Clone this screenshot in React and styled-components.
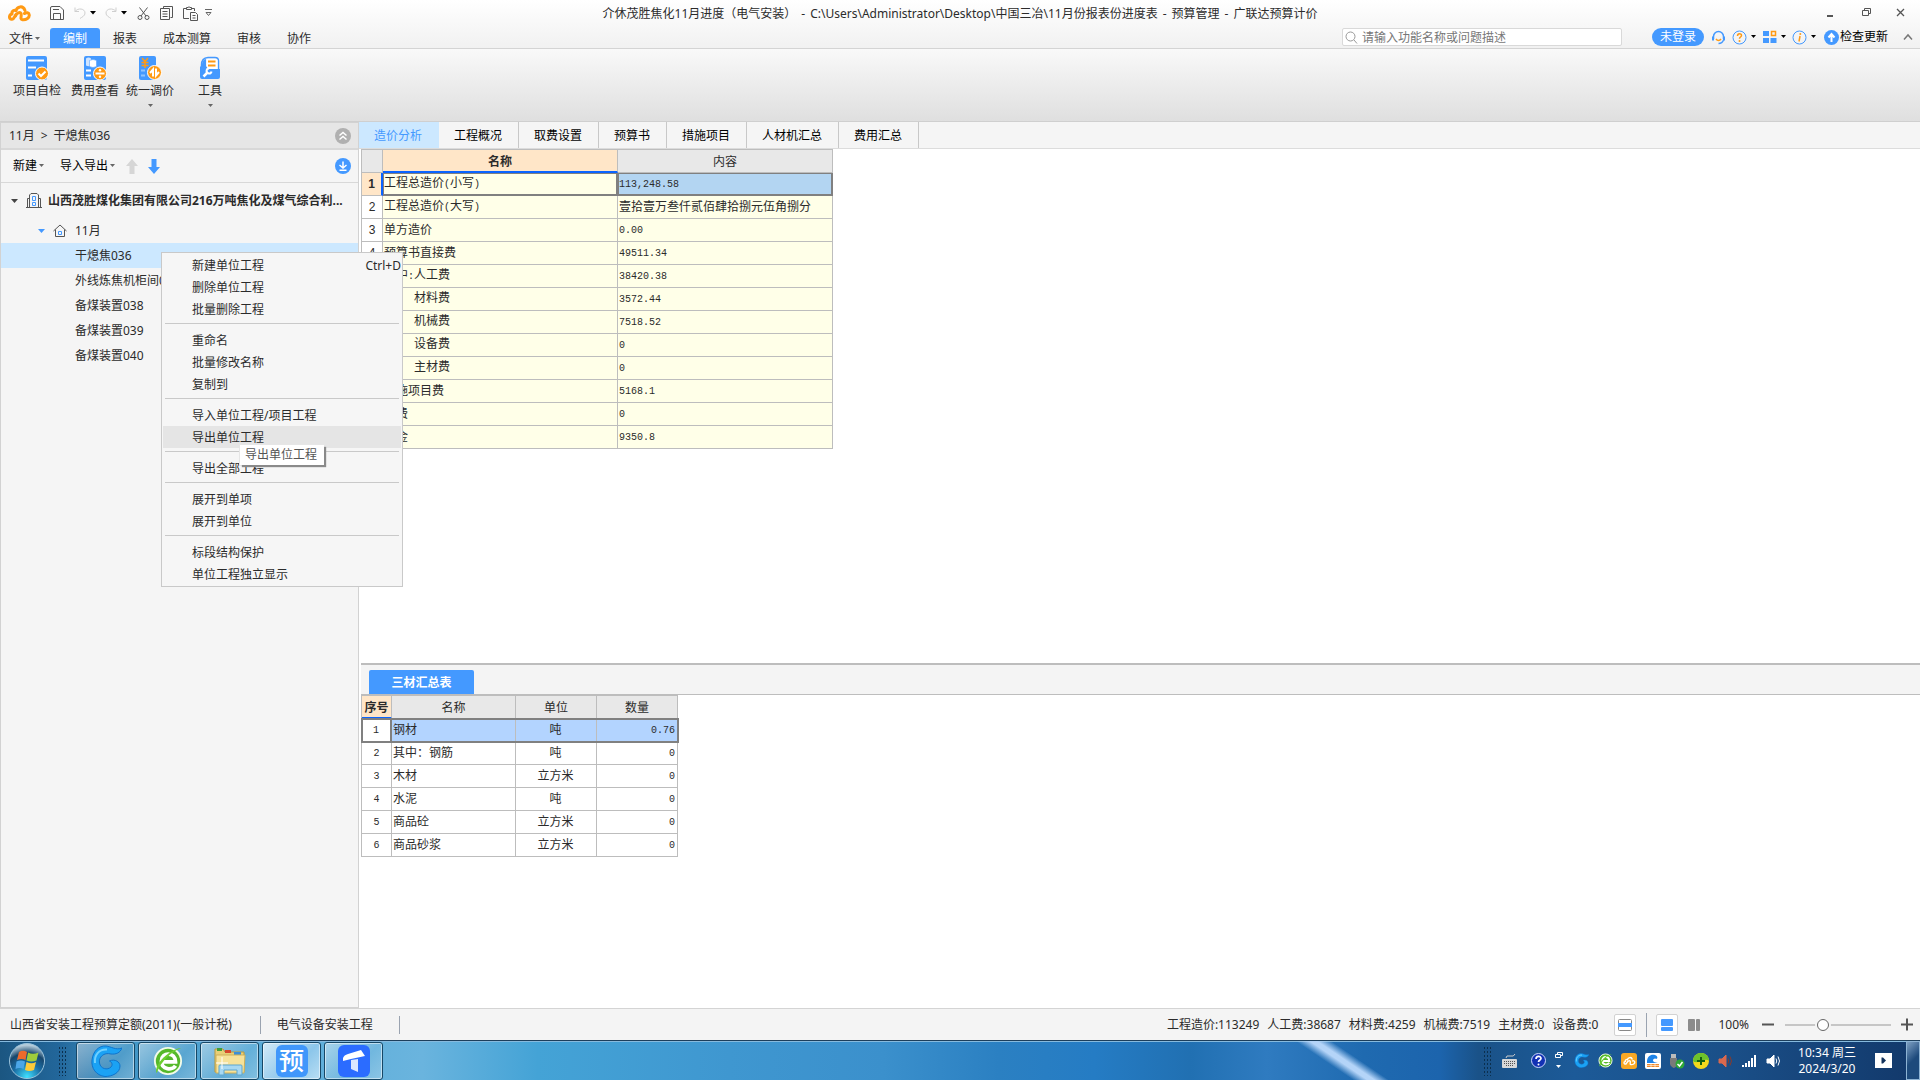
import { useState } from "react";
import styled, { createGlobalStyle, css } from "styled-components";

const blue = "#4499ff";
const orange = "#ff9a14";

const GlobalStyle = createGlobalStyle`
  * {
    box-sizing: border-box;
  }
  body {
    margin: 0;
    font-family: "Noto Sans", "Noto Sans CJK SC", sans-serif;
    font-size: 12px;
    line-height: 16px;
    color: #2b2b2b;
    background: #fff;
  }
  button, input {
    font: inherit;
    color: inherit;
  }
  button {
    border: 0;
    padding: 0;
    background: none;
    white-space: nowrap;
  }
  svg {
    display: block;
    flex: none;
  }
`;

const Page = styled.div`
  position: relative;
  display: flex;
  flex-direction: column;
  min-height: 100vh;
`;

/* ---------- top ---------- */

const Header = styled.header`
  background: linear-gradient(#ffffff, #f1f1f1);
  border-bottom: 1px solid #d4d4d4;
`;
const TitleBar = styled.div`
  display: grid;
  grid-template-columns: 1fr auto 1fr;
  align-items: center;
  height: 26px;
`;
const QuickBar = styled.div`
  display: flex;
  align-items: center;
  padding-left: 7px;
`;
const IconButton = styled.button`
  display: flex;
  align-items: center;
  gap: 4px;
  margin-left: ${(p) => p.$gap || 0}px;
`;
const Title = styled.h1`
  margin: 0;
  padding-top: 1px;
  font-size: 12px;
  font-weight: normal;
`;
const Dash = styled.span`
  margin: 0 5px;
`;
const WindowButtons = styled.div`
  display: flex;
  justify-content: flex-end;
  gap: 24px;
  padding-right: 13px;
`;
const MenuBar = styled.nav`
  display: flex;
  align-items: flex-end;
  height: 22px;
`;
const FileMenu = styled.button`
  display: flex;
  align-items: center;
  gap: 2px;
  height: 20px;
  width: 50px;
  padding: 2px 0 0 9px;
`;
const MenuTab = styled.button`
  height: 20px;
  padding: 2px 13px 0;
  border-radius: 3px 3px 0 0;
  ${(p) =>
    p.$active &&
    css`
      color: #fff;
      background: ${blue};
    `}
`;
const MenuRight = styled.div`
  display: flex;
  align-items: center;
  height: 20px;
  margin-left: auto;
  padding: 0 7px 2px 0;
`;
const SearchBox = styled.label`
  display: flex;
  align-items: center;
  gap: 4px;
  width: 280px;
  height: 18px;
  margin-right: 30px;
  padding-left: 2px;
  background: #fff;
  border: 1px solid #d9d9d9;
  border-radius: 2px;
`;
const SearchInput = styled.input`
  flex: 1;
  min-width: 0;
  height: 16px;
  padding: 1px 0 0;
  border: 0;
  outline: 0;
  background: none;
  &::placeholder {
    color: #777;
    opacity: 1;
  }
`;
const LoginButton = styled.button`
  width: 52px;
  height: 18px;
  border-radius: 9px;
  color: #fff;
  background: ${blue};
`;
const UpdateButton = styled.button`
  display: flex;
  align-items: center;
  gap: 1px;
  margin: 0 15px 0 8px;
  color: #000;
`;

const Ribbon = styled.div`
  display: flex;
  align-items: flex-start;
  height: 73px;
  padding: 7px 0 0 13px;
  background: linear-gradient(#f9f9f9, #dfdfdf);
  border-bottom: 1px solid #cfcfcf;
`;
const RibbonButton = styled.button`
  display: flex;
  flex-direction: column;
  align-items: center;
  width: 48px;
  margin-right: ${(p) => p.$gap}px;
`;
const RibbonLabel = styled.span`
  margin: 3px 0 5px;
`;

/* ---------- left side ---------- */

const Main = styled.main`
  flex: 1;
  display: flex;
`;
const Sidebar = styled.aside`
  flex: none;
  width: 359px;
  background: #f5f5f5;
  border: 1px solid #d2d2d2;
`;
const SideHeader = styled.div`
  display: flex;
  align-items: center;
  gap: 6px;
  height: 27px;
  padding: 0 7px 0 8px;
  background: #e6e6e6;
  border-bottom: 2px solid #d8d8d8;
`;
const SideTools = styled.div`
  display: flex;
  align-items: center;
  height: 33px;
  padding: 0 7px 0 12px;
  border-bottom: 1px solid #d8d8d8;
`;
const SideTool = styled.button`
  display: flex;
  align-items: center;
  gap: 2px;
  margin-right: ${(p) => p.$gap}px;
  color: #000;
`;
const PushRight = styled.button`
  margin-left: auto;
`;
const TreeRow = styled.div`
  display: flex;
  align-items: center;
  height: ${(p) => (p.$root ? 35 : 25)}px;
  padding-left: ${(p) => p.$indent}px;
  font-weight: ${(p) => (p.$root ? "bold" : "normal")};
  background: ${(p) => (p.$selected ? "#cce8ff" : "none")};
  white-space: nowrap;
`;
const TreeIcon = styled.span`
  margin: 0 ${(p) => p.$after}px 0 8px;
`;

/* ---------- right side ---------- */

const Content = styled.section`
  flex: 1;
  display: flex;
  flex-direction: column;
  min-width: 0;
  background: #fff;
`;
const TabBar = styled.div`
  display: flex;
  height: 27px;
  background: #f5f5f5;
  border-bottom: 1px solid #dcdcdc;
`;
const Tab = styled.button`
  padding: 2px 16px 0 15px;
  color: ${(p) => (p.$active ? blue : "#000")};
  background: ${(p) => (p.$active ? "#cce8ff" : "none")};
  border-right: 1px solid ${(p) => (p.$active ? "#cce8ff" : "#c8c8c8")};
`;
const Upper = styled.div`
  flex: 1;
  padding-left: 2px;
`;
const Lower = styled.div`
  height: 345px;
  margin-left: 2px;
  border-top: 2px solid #bdbdbd;
`;
const LowerTabs = styled.div`
  display: flex;
  align-items: flex-end;
  height: 30px;
  padding-left: 8px;
  background: #f4f4f4;
  border-bottom: 1px solid #bdbdbd;
`;
const LowerTab = styled.button`
  width: 105px;
  height: 24px;
  padding-top: 2px;
  color: #fff;
  font-weight: bold;
  background: ${blue};
  border-radius: 2px 2px 0 0;
`;

const Table = styled.table`
  table-layout: fixed;
  width: ${(p) => p.$width}px;
  border-collapse: separate;
  border-spacing: 0;
  border: solid #bdbdbd;
  border-width: 1px 0 0 1px;
  font-family: "Liberation Sans", "Noto Sans CJK SC", sans-serif;
`;
const Col = styled.col`
  width: ${(p) => p.$width}px;
`;
const cell = css`
  height: 23px;
  padding: 0 2px 0 1px;
  border: solid #bdbdbd;
  border-width: 0 1px 1px 0;
  font-weight: normal;
  white-space: pre;
`;
const Th = styled.th`
  ${cell}
  padding: 2px 0 0;
  background: #e8e8e8;
  ${(p) =>
    p.$current &&
    css`
      font-weight: bold;
      background: #ffe6c8;
      border-bottom: 2px solid #0a64ff;
    `}
`;
const IndexCell = styled.th`
  ${cell}
  padding: 0;
  ${(p) =>
    p.$current &&
    css`
      font-weight: bold;
      background: #ffe6c8;
      border-right: 2px solid #0a64ff;
    `}
`;
const Td = styled.td`
  ${cell}
  text-align: ${(p) => p.$align || "left"};
  background: ${(p) => p.$bg || "#fff"};
  ${(p) =>
    p.$boxed &&
    css`
      border-color: #808080;
      box-shadow: inset 0 0 0 1px #808080;
    `}
`;
const SelectedRow = styled.tr`
  outline: 2px solid #808080;
  outline-offset: -1px;
  & > th {
    border-right: 2px solid #808080;
  }
`;
const Half = styled.span`
  font-family: "Liberation Mono", monospace;
  font-size: 10px;
`;

/* ---------- context menu ---------- */

const ContextMenu = styled.div`
  position: absolute;
  left: 161px;
  top: 252px;
  width: 242px;
  padding: 1px;
  background: #f6f6f6;
  border: 1px solid #c9c9c9;
`;
const MenuItem = styled.button`
  position: relative;
  display: flex;
  align-items: center;
  justify-content: space-between;
  width: 100%;
  height: 22px;
  padding: 2px 0 0 29px;
  background: ${(p) => (p.$hover ? "#e5e5e5" : "none")};
`;
const Separator = styled.hr`
  height: 1px;
  margin: 3px 2px 5px;
  border: 0;
  background: #c9c9c9;
`;
const Tooltip = styled.span`
  position: absolute;
  z-index: 1;
  left: 77px;
  top: 19px;
  padding: 2px 7px 2px 5px;
  color: #555;
  background: #fff;
  box-shadow: 2px 2px 1px #8a8a8a, 0 0 0 1px #e6e6e6;
`;

/* ---------- bottom ---------- */

const StatusBar = styled.footer`
  display: flex;
  align-items: center;
  height: 32px;
  padding: 0 6px 0 10px;
  background: #f4f4f4;
  border-top: 1px solid #d4d4d4;
`;
const Divider = styled.span`
  width: 1px;
  height: ${(p) => p.$height || 18}px;
  margin: 0 ${(p) => p.$after}px 0 ${(p) => p.$before}px;
  background: #9aa3b0;
`;
const Totals = styled.div`
  display: flex;
  gap: 8px;
  margin: 0 16px 0 auto;
`;
const ViewButton = styled.button`
  display: flex;
  align-items: center;
  justify-content: center;
  width: 22px;
  height: 22px;
  margin-left: ${(p) => p.$gap || 0}px;
  border: 1px solid ${(p) => (p.$on ? "#d2d2d2" : "transparent")};
  border-radius: 2px;
  background: ${(p) => (p.$on ? "#fff" : "none")};
`;
const ZoomText = styled.span`
  margin: 0 13px;
`;
const ZoomSlider = styled.input`
  appearance: none;
  width: 106px;
  height: 14px;
  margin: 0 10px;
  background: linear-gradient(#c6c6c6, #c6c6c6) center / 100% 2px no-repeat;
  &::-webkit-slider-thumb {
    appearance: none;
    width: 12px;
    height: 12px;
    border: 1px solid #666;
    border-radius: 50%;
    background: #fff;
    box-shadow: 0 0 0 2px #f4f4f4;
  }
`;

const TaskBar = styled.div`
  position: relative;
  display: flex;
  align-items: center;
  height: 40px;
  overflow: hidden;
  padding-left: 8px;
  color: #fff;
  border-top: 1px solid #1d3f5c;
  box-shadow: inset 0 1px 0 #86bade;
  background: linear-gradient(
    90deg,
    #1b5681 0%,
    #22669a 3%,
    #3f93c4 6%,
    #5aacd8 14%,
    #6ab4de 22%,
    #44a3d6 28%,
    #3f97d0 38%,
    #3b90cc 46%,
    #2b80c2 52%,
    #257cc4 57%,
    #2170b2 62%,
    #2f7bc0 66%,
    #1f6ab0 71%,
    #1c64ad 75%,
    #1a5288 77%,
    #1c5a98 82%,
    #1a4f88 90%,
    #12386a 100%
  );
  &::before {
    content: "";
    position: absolute;
    left: 69%;
    top: 0;
    width: 36px;
    height: 40px;
    transform: skewX(56deg);
    background: linear-gradient(90deg, transparent, #b4d4f8 40%, #b4d4f8 60%, transparent);
  }
`;
const Grip = styled.span`
  width: 8px;
  height: 30px;
  margin-left: ${(p) => p.$before}px;
  background: radial-gradient(circle, #0b2f4e 1px, transparent 1px) 0 0 / 3px 4px;
`;
const Apps = styled.div`
  display: flex;
  gap: 3px;
  margin-left: 10px;
`;
const AppButton = styled.button`
  display: flex;
  align-items: center;
  justify-content: center;
  width: 59px;
  height: 38px;
  border: 1px solid #164766;
  border-radius: 3px;
  box-shadow: inset 0 0 0 1px rgba(255, 255, 255, 0.5);
  background: ${(p) =>
    p.$active
      ? "linear-gradient(135deg, #d3eaf8, #8cc6ea 60%, #b9def4)"
      : "linear-gradient(135deg, rgba(255,255,255,0.45), rgba(255,255,255,0.08) 60%, rgba(255,255,255,0.25))"};
`;
const YuTile = styled.span`
  width: 32px;
  height: 32px;
  border-radius: 6px;
  color: #fff;
  font-size: 25px;
  font-weight: 500;
  line-height: 31px;
  background: #4097fb;
`;
const Tray = styled.div`
  display: flex;
  align-items: center;
  align-self: stretch;
  margin-left: auto;
`;
const TrayIcon = styled.button`
  display: flex;
  justify-content: center;
  width: ${(p) => p.$width || 24}px;
`;
const Clock = styled.time`
  width: 84px;
  text-align: center;
`;
const ShowDesktop = styled.button`
  align-self: stretch;
  width: 14px;
  margin-left: 9px;
  border: 1px solid #8db3d4;
  background: linear-gradient(135deg, #7d9fc2, #1d4a7c 50%);
`;

/* ---------- icons ---------- */

const Svg = ({ w, h = w, children, ...rest }) => (
  <svg width={w} height={h} viewBox={`0 0 ${w} ${h}`} fill="none" aria-hidden="true" {...rest}>
    {children}
  </svg>
);

const Caret = ({ color = "#666", w = 6 }) => (
  <Svg w={w} h={4}>
    <path d={`M0 0h${w}L${w / 2} ${w / 2 + 0.5}z`} fill={color} />
  </Svg>
);

const CloudMark = () => (
  <Svg w={24} h={18} stroke={orange} strokeWidth="3" strokeLinecap="round" strokeLinejoin="round">
    <path d="M9 10.500 6.500 14.500Q5.500 15.500 4.500 15.300C1.500 14.500 2 10.500 5 10c-.6-3 2.400-4.300 4-3.300C10 2.500 16 .8 18 6.500" />
    <path d="M8.500 12c1-3 4.500-4.500 5.500-2.500 1 2-1.500 6 1.500 6.200 4 .3 7-2 6.800-4.700-.2-2.500-3-3-4.800-1.500" />
  </Svg>
);

const SaveIcon = () => (
  <Svg w={14} stroke="#555">
    <path d="M.5 13.500V2Q.5 .5 2 .5H10L13.500 4V13.500zM3.500 13.500V7.500h7v6M3 3.500h6" />
  </Svg>
);
const UndoIcon = ({ flip }) => (
  <Svg w={12} stroke="#cfcfcf" transform={flip ? "scale(-1 1)" : undefined}>
    <path d="M1 .5v4h4M1 4.500C4 .5 11 1.500 11 6c0 3-3 4-5 5.500" />
  </Svg>
);
const CutIcon = () => (
  <Svg w={13} stroke="#555">
    <circle cx="3" cy="10.500" r="2" />
    <circle cx="10" cy="10.500" r="2" />
    <path d="M4 9 10.500.5M9 9 2.500.5" />
  </Svg>
);
const CopyIcon = () => (
  <Svg w={13} h={14} stroke="#555">
    <path d="M3.500 2.500V.5H12.500V11.500H10.500" />
    <path d="M.5 2.500H9.500V13.500H.5zM2.500 5.500h5M2.500 8h5M2.500 10.500h5" />
  </Svg>
);
const PasteIcon = () => (
  <Svg w={15} h={15} stroke="#555">
    <path d="M6 12.500H.5V2.500H3M9 2.500h2.500V5M3.500 3.500V1.500H5Q6 0 7 1.500H8.500v2z" />
    <path d="M7.500 6.500h5l2 2v6h-7zM9.500 9.500h3M9.500 12h3" />
  </Svg>
);
const MoreIcon = () => (
  <Svg w={7} h={8} stroke="#666">
    <path d="M0 .5h7M1 3.500h5L3.500 6.500z" />
  </Svg>
);
const SearchGlyph = () => (
  <Svg w={13} stroke="#999">
    <circle cx="5.500" cy="5.500" r="4.500" />
    <path d="m9 9 3 3.500" />
  </Svg>
);
const HeadsetIcon = () => (
  <Svg w={15}>
    <path d="M2.500 9V6.500a5 5 0 0 1 10 0V9" stroke={blue} strokeWidth="1.500" />
    <path d="M1 6.500h2v4H1zM12 6.500h2v4h-2z" fill={blue} />
    <path d="M12.500 10c-1 3-3 3.500-5 3.500" stroke={blue} strokeWidth="1.300" />
    <path d="M5 9c1.500 2 3.500 2 5 0" stroke={orange} strokeWidth="1.500" />
  </Svg>
);
const HelpIcon = () => (
  <Svg w={15}>
    <circle cx="7.500" cy="7.500" r="6.500" stroke={blue} />
    <path d="M5.500 6c0-3 4-3 4-.5 0 1.500-2 1.500-2 3.200" stroke={orange} strokeWidth="1.500" />
    <circle cx="7.500" cy="11" r="1" fill={orange} />
  </Svg>
);
const InfoIcon = () => (
  <Svg w={15}>
    <circle cx="7.500" cy="7.500" r="6.500" stroke={blue} />
    <path d="M8 6 7 11.500" stroke={orange} strokeWidth="1.500" />
    <circle cx="8.300" cy="4" r="1" fill={orange} />
  </Svg>
);
const AppsIcon = () => (
  <Svg w={14}>
    <path d="M0 1h6v5H0zM0 8h6v5H0zM7.500 8h6v5h-6z" fill={blue} />
    <path d="M8.500 1.500h4v4h-4z" stroke={orange} strokeWidth="1.500" />
  </Svg>
);
const UpCircle = () => (
  <Svg w={15}>
    <circle cx="7.500" cy="7.500" r="7.500" fill={blue} />
    <path d="M7.500 12V5M4.500 7.500l3-3.500 3 3.500" stroke="#fff" strokeWidth="2" />
  </Svg>
);

const CheckDocIcon = () => (
  <Svg w={24}>
    <rect x="1" width="21" height="24" rx="2" fill={blue} />
    <path d="M3 4.500h16M3 11.500h8M3 19.500h4" stroke="#fff" strokeWidth="2" />
    <circle cx="17" cy="17.500" r="6.500" fill={orange} stroke="#fff" />
    <path d="m13.500 17.500 2.500 2.500 4.500-4.500" stroke="#fff" strokeWidth="2" />
  </Svg>
);
const FeeDocIcon = () => (
  <Svg w={24}>
    <rect x="1" width="22" height="24" rx="2" fill={blue} />
    <path d="M3 2.500q2.500-2 5 0V9.500Q5.500 11 3 9.500z" fill="#cfe4ff" />
    <path d="M6.500 4.500q3.500-2 7 0v6q-3.500 2-7 0z" fill="#fff" stroke={blue} strokeWidth=".5" />
    <path d="M3 14.500h5M3 19.500h5" stroke="#fff" strokeWidth="2" />
    <circle cx="17" cy="17.500" r="6.500" fill={orange} stroke="#fff" />
    <path d="M12.500 17.500h9" stroke="#fff" strokeWidth="2" />
    <circle cx="17" cy="14.300" r="1.200" fill="#fff" />
    <circle cx="17" cy="20.700" r="1.200" fill="#fff" />
  </Svg>
);
const PriceDocIcon = () => (
  <Svg w={24}>
    <rect x="1" width="17" height="24" rx="2" fill={blue} />
    <path d="m4 2 3 3.500L10 2M7 5.500V12M3.500 6.500h7M3.500 9.500h7" stroke={orange} strokeWidth="1.500" />
    <path d="M3 14.500h4M3 19.500h4" stroke="#8fc3ff" strokeWidth="2" />
    <circle cx="16.500" cy="16.500" r="7" fill={orange} stroke="#fff" />
    <path d="M15 20.500v-7l-3 3.500M18 12.500v7l3-3.500" stroke="#fff" strokeWidth="2" />
  </Svg>
);
const ToolsIcon = () => (
  <Svg w={20} h={24}>
    <path d="M1.500 12V9Q1.500 2 8 1.500h7q3.500 0 3.500 3.500v9" stroke={blue} strokeWidth="1.500" />
    <path d="M2 8Q3 3.500 6 3v8H2z" fill={blue} />
    <path d="M7 3h9q1.500 0 1.500 1.500V13H7z" fill="#fff" />
    <path d="M8 5.500h7.500M8 9.500h7.500" stroke={orange} strokeWidth="2" />
    <path d="M0 10.500h6.500l1.500 2.500h12v8q0 2-2 2H2q-2 0-2-2z" fill={blue} />
    <path d="m3.500 20.500 4.500-4.500" stroke="#fff" strokeWidth="2.500" />
    <path d="M9 12.500a2.500 2.500 0 1 0 2.500 3" stroke="#fff" strokeWidth="2" />
  </Svg>
);

const CollapseIcon = () => (
  <Svg w={16} stroke="#fff" strokeWidth="1.500">
    <circle cx="8" cy="8" r="8" fill="#b0b0b0" stroke="none" />
    <path d="m4.500 7.500 3.500-3 3.500 3M4.500 11.500l3.500-3 3.500 3" />
  </Svg>
);
const DownloadIcon = () => (
  <Svg w={16} stroke="#fff" strokeWidth="1.500">
    <circle cx="8" cy="8" r="8" fill={blue} stroke="none" />
    <path d="M8 3.500V10M4.500 7 8 10l3.500-3M4.500 12.200h7" />
  </Svg>
);
const ArrowIcon = ({ color, down }) => (
  <Svg w={12} h={15}>
    <path d={down ? "M3.500 0h5v8H12L6 15 0 8h3.500z" : "M3.500 15h5V7H12L6 0 0 7h3.500z"} fill={color} />
  </Svg>
);
const BuildingIcon = () => (
  <Svg w={16} h={15} stroke="#555">
    <path d="M3.500 14.500V2L5 .5h6L12.500 2V14.500M3.500 5.500H1.500v9M12.500 5.500h2v9M0 14.500h16" />
    <path d="M6.500 3.500h3v4h-3zM6.500 9.500h3v3h-3z" stroke={blue} />
  </Svg>
);
const HouseIcon = () => (
  <Svg w={14} h={13} stroke="#555">
    <path d="M.5 7 7 1l6.500 6M2.500 5.500v7h9v-7" />
    <path d="M5.500 7.500h3v3h-3z" stroke={blue} />
  </Svg>
);

const StartOrb = () => (
  <Svg w={38}>
    <defs>
      <radialGradient id="orb" cx="50%" cy="95%" r="90%">
        <stop offset="0" stopColor="#3fe0ff" />
        <stop offset="0.450" stopColor="#1a6da4" />
        <stop offset="0.750" stopColor="#17466c" />
        <stop offset="1" stopColor="#b6ccda" />
      </radialGradient>
    </defs>
    <circle cx="19" cy="19" r="17.500" fill="url(#orb)" stroke="#9cc4dc" />
    <path d="M11 10q4-2.500 8 0l-1.500 8q-4-2-8.500 0z" fill="#ee6a2c" />
    <path d="M20 10.500q5 2.500 10.500 0L28.500 18.500q-5 2-10 0z" fill="#9fcc3b" />
    <path d="M8.500 19.500q4.500-2 8.500 0L15.500 27q-4-2-8 0z" fill="#4ba6e8" />
    <path d="M18.500 20q5 2.500 9.500 0L26 28q-5 2-9 0z" fill="#fccb3a" />
  </Svg>
);
const SwirlIcon = ({ size }) => (
  <svg width={size} height={size} viewBox="0 0 32 32" aria-hidden="true">
    <path
      d="M32 3C30 8 26 9.500 21 9 14 7 8.500 12 9.500 18c1 6 8 7.500 11.500 4 2-2 1-5-1.500-6C25 13.500 30 17 30 21c0 7-8 10.500-15 10.500C6 30.500 1 23 2 15 3 6 9 .5 16 1c5 .500 10 4.500 16 2z"
      fill="#1ba2f4"
      stroke="#0f74cc"
    />
    <path d="M5 18C4 10 9 4 17 4.500" stroke="#6fd0ff" strokeWidth="2" fill="none" />
  </svg>
);
const BrowserIcon = ({ size }) => (
  <svg width={size} height={size} viewBox="0 0 32 32" aria-hidden="true">
    <circle cx="16" cy="16" r="14" fill="#55b82b" stroke="#f2fbea" strokeWidth="2" />
    <path d="M24 21c-3 5-15 5-15-5s15-10 15 1H10" fill="none" stroke="#fff" strokeWidth="4" />
    <path d="M4 29C0 20 18 3 30 2c-9 3-22 14-26 27z" fill="#6ccf30" />
  </svg>
);
const FolderIcon = () => (
  <Svg w={34} h={32}>
    <path d="M2 4h8l2 3h19v20H2z" fill="#e8cf77" stroke="#b99a3c" />
    <path d="M4 3h5v3H4z" fill="#3f9f3a" />
    <path d="M12 5h6v3h-6z" fill="#d6482e" />
    <path d="M21 7h7v3h-7z" fill="#3c8fd8" />
    <path d="M3 10h29l-1 18H3z" fill="#f6e29a" stroke="#cdb05a" />
    <path d="M6 30V21q0-1 1-1h21q1 0 1 1v9h-5v-5H11v5z" fill="#a7d8f2" stroke="#5da6cf" />
    <path d="M9 12v12M3 18h12" stroke="#fff" />
  </Svg>
);
const TowerIcon = () => (
  <Svg w={32}>
    <rect width="32" height="32" rx="6" fill="#2b6cff" />
    <path d="M5 13Q6 10 10 9L23 5l4 6-14 3-8 2z" fill="#fff" />
    <path d="m13 15 7-1v13l-7-3z" fill="#dbe7ff" />
  </Svg>
);

const KeyboardIcon = () => (
  <Svg w={15} h={14}>
    <path d="M4 4Q4 1 8 2t5-2" stroke="#ccc" />
    <rect x="0" y="5" width="15" height="9" rx="1" fill="#d8d8d8" />
    <path d="M2 7.500h11M2 9.500h11M4 11.500h7" stroke="#555" strokeDasharray="1 1" />
  </Svg>
);
const QuestionIcon = () => (
  <Svg w={15}>
    <circle cx="7.500" cy="7.500" r="7" fill="#1231b4" stroke="#cdd6ff" />
    <path d="M5 6c0-3.500 5-3.500 5-.5 0 1.500-2.500 1.500-2.500 3.500" stroke="#fff" strokeWidth="1.700" />
    <circle cx="7.500" cy="11.500" r="1" fill="#fff" />
  </Svg>
);
const LangIcon = () => (
  <Svg w={8} h={18}>
    <path d="M2.500 2.500V.5h5v3h-2M.5 2.500h5v3h-5z" stroke="#fff" />
    <path d="M1 13h5l-2.500 3z" fill="#fff" />
  </Svg>
);
const CloudTile = () => (
  <Svg w={16}>
    <rect width="16" height="16" rx="3" fill="#f9a825" />
    <g transform="translate(1.500 3) scale(.55)">
      <path d="M9 10.500 6.500 14.500C1.500 15.500 2 10.500 5 10c-.6-3 2.400-4.300 4-3.300C10 2.500 16 .8 18 6.500M8.500 12c1-3 4.500-4.500 5.500-2.500 1 2-1.500 6 1.500 6.200 4 .3 7-2 6.800-4.700-.2-2.500-3-3-4.800-1.500" stroke="#fff" strokeWidth="2.500" />
    </g>
  </Svg>
);
const WaveTile = () => (
  <Svg w={16}>
    <rect width="16" height="16" rx="2" fill="#fff" />
    <path d="M2 9C2 3 6 1 10 2c3 1 3 4 1 4-1-1-3 0-3 1.500S11 10 14 10H2z" fill="#1d83e8" />
    <path d="M2 11h12v3H2z" fill="#f08a2c" />
    <path d="M6 11v3M10 11v3M2 12.500h12" stroke="#fff" strokeWidth=".6" />
  </Svg>
);
const UsbIcon = () => (
  <Svg w={16}>
    <path d="M2 1h5v4H2z" fill="#bbb" />
    <path d="M1 5h7v6q0 3-3.500 4Q1 13 1 11z" fill="#7a7a7a" />
    <circle cx="11" cy="11" r="4.500" fill="#2ea836" />
    <path d="m8.500 11 2 2 3-4" stroke="#fff" strokeWidth="1.500" />
  </Svg>
);
const GuardIcon = () => (
  <Svg w={16}>
    <circle cx="8" cy="8" r="8" fill="#f4d91c" />
    <path d="M0 8a8 8 0 0 1 16 0C12 4 4 12 0 8z" fill="#6cc22c" />
    <path d="M8 4v8M4 8h8" stroke="#16620f" strokeWidth="2" />
  </Svg>
);
const SpeakerIcon = ({ color, wave }) => (
  <Svg w={15} h={14}>
    <path d="M1 5h3l4-4v12L4 9H1z" fill={color} stroke={color} />
    <path d="M10 4.500q1.500 2.500 0 5M12 2.500q3 4.500 0 9" stroke={wave} />
  </Svg>
);
const SignalIcon = () => (
  <Svg w={15} h={12} fill="#fff">
    <path d="M0 10h2v2H0zM3 8h2v4H3zM6 6h2v6H6zM9 3h2v9H9zM12 0h2v12h-2z" />
  </Svg>
);
const FlagIcon = () => (
  <Svg w={17} h={15}>
    <path d="M0 0h17v15H0z" fill="#fff" />
    <path d="M6.500 4.500h1.500l3 3-3 3h-1.500z" fill="#12325c" />
  </Svg>
);

/* ---------- data ---------- */

const menuTabs = ["编制", "报表", "成本测算", "审核", "协作"];
const ribbonItems = [
  { label: "项目自检", icon: <CheckDocIcon />, gap: 10 },
  { label: "费用查看", icon: <FeeDocIcon />, gap: 7 },
  { label: "统一调价", icon: <PriceDocIcon />, gap: 12, drop: true },
  { label: "工具", icon: <ToolsIcon />, gap: 0, drop: true },
];
const units = ["干熄焦036", "外线炼焦机柜间037", "备煤装置038", "备煤装置039", "备煤装置040"];
const contentTabs = ["造价分析", "工程概况", "取费设置", "预算书", "措施项目", "人材机汇总", "费用汇总"];
const costRows = [
  ["工程总造价(小写)", "113,248.58"],
  ["工程总造价(大写)", "壹拾壹万叁仟贰佰肆拾捌元伍角捌分"],
  ["单方造价", "0.00"],
  ["预算书直接费", "49511.34"],
  ["其中:人工费", "38420.38"],
  ["     材料费", "3572.44"],
  ["     机械费", "7518.52"],
  ["     设备费", "0"],
  ["     主材费", "0"],
  ["措施项目费", "5168.1"],
  ["规费", "0"],
  ["税金", "9350.8"],
];
const materialRows = [
  ["钢材", "吨", "0.76"],
  ["其中：钢筋", "吨", "0"],
  ["木材", "立方米", "0"],
  ["水泥", "吨", "0"],
  ["商品砼", "立方米", "0"],
  ["商品砂浆", "立方米", "0"],
];
const contextItems = [
  ["新建单位工程", "删除单位工程", "批量删除工程"],
  ["重命名", "批量修改名称", "复制到"],
  ["导入单位工程/项目工程", "导出单位工程"],
  ["导出全部工程"],
  ["展开到单项", "展开到单位"],
  ["标段结构保护", "单位工程独立显示"],
];
const totals = ["工程造价:113249", "人工费:38687", "材料费:4259", "机械费:7519", "主材费:0", "设备费:0"];

// half-width characters take exactly half of a full-width one in the grids
const GridText = ({ text }) =>
  text
    .split(/([\x20-\x7e]+)/)
    .filter(Boolean)
    .map((part, i) => (/^[\x20-\x7e]/.test(part) ? <Half key={i}>{part}</Half> : part));

const CostTable = () => (
  <Table $width={472}>
    <colgroup>
      <Col $width={21} />
      <Col $width={235} />
      <Col $width={215} />
    </colgroup>
    <thead>
      <tr>
        <Th />
        <Th $current>名称</Th>
        <Th>内容</Th>
      </tr>
    </thead>
    <tbody>
      {costRows.map(([name, value], i) => (
        <tr key={name}>
          <IndexCell $current={i === 0}>{i + 1}</IndexCell>
          <Td $bg="#ffffe8" $boxed={i === 0}>
            <GridText text={name} />
          </Td>
          <Td $bg={i === 0 ? "#b3d5f2" : "#ffffe8"} $boxed={i === 0}>
            <GridText text={value} />
          </Td>
        </tr>
      ))}
    </tbody>
  </Table>
);

const MaterialTable = () => (
  <Table $width={317}>
    <colgroup>
      <Col $width={30} />
      <Col $width={124} />
      <Col $width={81} />
      <Col $width={81} />
    </colgroup>
    <thead>
      <tr>
        <Th $current>序号</Th>
        <Th>名称</Th>
        <Th>单位</Th>
        <Th>数量</Th>
      </tr>
    </thead>
    <tbody>
      {materialRows.map(([name, unit, amount], i) => {
        const Row = i === 0 ? SelectedRow : "tr";
        const bg = i === 0 ? "#b3d4ff" : "#fff";
        return (
          <Row key={name}>
            <IndexCell>
              <GridText text={String(i + 1)} />
            </IndexCell>
            <Td $bg={bg}>{name}</Td>
            <Td $bg={bg} $align="center">
              {unit}
            </Td>
            <Td $bg={bg} $align="right">
              <GridText text={amount} />
            </Td>
          </Row>
        );
      })}
    </tbody>
  </Table>
);

const App = () => {
  const [zoom, setZoom] = useState(34);

  return (
    <Page>
      <GlobalStyle />
      <Header>
        <TitleBar>
          <QuickBar>
            <CloudMark />
            <IconButton $gap={19} aria-label="保存"><SaveIcon /></IconButton>
            <IconButton $gap={10} disabled aria-label="撤销"><UndoIcon /><Caret color="#000" /></IconButton>
            <IconButton $gap={9} disabled aria-label="恢复"><UndoIcon flip /><Caret color="#000" /></IconButton>
            <IconButton $gap={10} aria-label="剪切"><CutIcon /></IconButton>
            <IconButton $gap={10} aria-label="复制"><CopyIcon /></IconButton>
            <IconButton $gap={10} aria-label="粘贴"><PasteIcon /></IconButton>
            <IconButton $gap={7} aria-label="更多"><MoreIcon /></IconButton>
          </QuickBar>
          <Title>
            介休茂胜焦化11月进度（电气安装）<Dash>-</Dash>C:\Users\Administrator\Desktop\中国三冶\11月份报表份进度表
            <Dash>-</Dash>预算管理<Dash>-</Dash>广联达预算计价
          </Title>
          <WindowButtons>
            <IconButton aria-label="最小化"><Svg w={12} stroke="#555"><path d="M4 9h6" strokeWidth="2" /></Svg></IconButton>
            <IconButton aria-label="还原"><Svg w={12} stroke="#555"><path d="M5.500 3.500v-2h6v5h-2M3.500 3.500h6v5h-6z" /></Svg></IconButton>
            <IconButton aria-label="关闭"><Svg w={12} stroke="#555"><path d="m2 2 7 7M9 2 2 9" strokeWidth="1.300" /></Svg></IconButton>
          </WindowButtons>
        </TitleBar>
        <MenuBar>
          <FileMenu>文件<Caret w={5} /></FileMenu>
          {menuTabs.map((tab, i) => (
            <MenuTab key={tab} $active={i === 0}>{tab}</MenuTab>
          ))}
          <MenuRight>
            <SearchBox>
              <SearchGlyph />
              <SearchInput placeholder="请输入功能名称或问题描述" aria-label="搜索" />
            </SearchBox>
            <LoginButton>未登录</LoginButton>
            <IconButton $gap={7} aria-label="客服"><HeadsetIcon /></IconButton>
            <IconButton $gap={6} aria-label="帮助"><HelpIcon /><Caret color="#000" w={5} /></IconButton>
            <IconButton $gap={7} aria-label="应用"><AppsIcon /><Caret color="#000" w={5} /></IconButton>
            <IconButton $gap={6} aria-label="信息"><InfoIcon /><Caret color="#000" w={5} /></IconButton>
            <UpdateButton><UpCircle />检查更新</UpdateButton>
            <IconButton aria-label="收起"><Svg w={10} h={8} stroke="#777"><path d="m1 6.500 4-4.500 4 4.500" strokeWidth="1.500" /></Svg></IconButton>
          </MenuRight>
        </MenuBar>
      </Header>

      <Ribbon>
        {ribbonItems.map((item) => (
          <RibbonButton key={item.label} $gap={item.gap}>
            {item.icon}
            <RibbonLabel>{item.label}</RibbonLabel>
            {item.drop && <Caret w={5} />}
          </RibbonButton>
        ))}
      </Ribbon>

      <Main>
        <Sidebar>
          <SideHeader>
            <span>11月</span>
            <span>&gt;</span>
            <span>干熄焦036</span>
            <PushRight aria-label="折叠"><CollapseIcon /></PushRight>
          </SideHeader>
          <SideTools>
            <SideTool $gap={16}>新建<Caret w={5} /></SideTool>
            <SideTool $gap={11}>导入导出<Caret w={5} /></SideTool>
            <SideTool $gap={10} aria-label="上移"><ArrowIcon color="#d6d6d6" /></SideTool>
            <SideTool $gap={0} aria-label="下移"><ArrowIcon color={blue} down /></SideTool>
            <PushRight aria-label="下载"><DownloadIcon /></PushRight>
          </SideTools>
          <TreeRow $root $indent={10}>
            <Caret w={7} color="#444" />
            <TreeIcon $after={6}><BuildingIcon /></TreeIcon>
            山西茂胜煤化集团有限公司216万吨焦化及煤气综合利...
          </TreeRow>
          <TreeRow $indent={37}>
            <Caret w={7} color={blue} />
            <TreeIcon $after={8}><HouseIcon /></TreeIcon>
            11月
          </TreeRow>
          {units.map((unit, i) => (
            <TreeRow key={unit} $indent={74} $selected={i === 0}>{unit}</TreeRow>
          ))}
        </Sidebar>

        <Content>
          <TabBar>
            {contentTabs.map((tab, i) => (
              <Tab key={tab} $active={i === 0}>{tab}</Tab>
            ))}
          </TabBar>
          <Upper>
            <CostTable />
          </Upper>
          <Lower>
            <LowerTabs>
              <LowerTab>三材汇总表</LowerTab>
            </LowerTabs>
            <MaterialTable />
          </Lower>
        </Content>
      </Main>

      <StatusBar>
        <span>山西省安装工程预算定额(2011)(一般计税)</span>
        <Divider $before={28} $after={16} />
        <span>电气设备安装工程</span>
        <Divider $before={26} $after={0} />
        <Totals>
          {totals.map((total) => (
            <span key={total}>{total}</span>
          ))}
        </Totals>
        <ViewButton $on aria-label="单页">
          <Svg w={14}>
            <rect x=".5" y="1.500" width="13" height="11" rx="1" stroke="#888" />
            <path d="M0 5h14v4H0z" fill={blue} />
          </Svg>
        </ViewButton>
        <Divider $height={24} $before={10} $after={9} />
        <ViewButton $on aria-label="上下布局">
          <Svg w={12} fill={blue}>
            <rect width="12" height="7" rx="1" />
            <rect y="8" width="12" height="4" rx="1" />
          </Svg>
        </ViewButton>
        <ViewButton $gap={5} aria-label="左右布局">
          <Svg w={12} fill="#8c8c8c">
            <rect width="7" height="12" rx="1" />
            <rect x="8" width="4" height="12" rx="1" />
          </Svg>
        </ViewButton>
        <ZoomText>100%</ZoomText>
        <IconButton aria-label="缩小"><Svg w={13} stroke="#555"><path d="M0 6.500h12" strokeWidth="2" /></Svg></IconButton>
        <ZoomSlider type="range" min="0" max="100" value={zoom} onChange={(e) => setZoom(Number(e.target.value))} aria-label="缩放" />
        <IconButton aria-label="放大"><Svg w={13} stroke="#555"><path d="M0 6.500h12M6 .5v12" strokeWidth="2" /></Svg></IconButton>
      </StatusBar>

      <TaskBar>
        <IconButton aria-label="开始"><StartOrb /></IconButton>
        <Grip $before={12} />
        <Apps>
          <AppButton aria-label="浏览器"><SwirlIcon size={32} /></AppButton>
          <AppButton aria-label="安全浏览器"><BrowserIcon size={30} /></AppButton>
          <AppButton aria-label="资源管理器"><FolderIcon /></AppButton>
          <AppButton $active><YuTile>预</YuTile></AppButton>
          <AppButton aria-label="工具"><TowerIcon /></AppButton>
        </Apps>
        <Tray>
          <Grip $before={0} />
          <TrayIcon $width={36} aria-label="键盘"><KeyboardIcon /></TrayIcon>
          <TrayIcon $width={22} aria-label="帮助"><QuestionIcon /></TrayIcon>
          <TrayIcon $width={20} aria-label="语言"><LangIcon /></TrayIcon>
          <TrayIcon aria-label="浏览器"><SwirlIcon size={15} /></TrayIcon>
          <TrayIcon aria-label="安全浏览器"><BrowserIcon size={15} /></TrayIcon>
          <TrayIcon aria-label="云"><CloudTile /></TrayIcon>
          <TrayIcon aria-label="驱动"><WaveTile /></TrayIcon>
          <TrayIcon aria-label="USB"><UsbIcon /></TrayIcon>
          <TrayIcon aria-label="安全卫士"><GuardIcon /></TrayIcon>
          <TrayIcon aria-label="声音"><SpeakerIcon color="#d9694e" wave="#8a3a2a" /></TrayIcon>
          <TrayIcon aria-label="网络"><SignalIcon /></TrayIcon>
          <TrayIcon aria-label="音量"><SpeakerIcon color="#fff" wave="#fff" /></TrayIcon>
          <Clock>
            10:34 周三
            <br />
            2024/3/20
          </Clock>
          <TrayIcon $width={28} aria-label="操作中心"><FlagIcon /></TrayIcon>
          <ShowDesktop aria-label="显示桌面" />
        </Tray>
      </TaskBar>

      <ContextMenu>
        {contextItems.map((group, g) => (
          <div key={group[0]}>
            {g > 0 && <Separator />}
            {group.map((item) => (
              <MenuItem key={item} $hover={item === "导出单位工程"}>
                {item}
                {item === "新建单位工程" && <span>Ctrl+D</span>}
                {item === "导出单位工程" && <Tooltip>{item}</Tooltip>}
              </MenuItem>
            ))}
          </div>
        ))}
      </ContextMenu>
    </Page>
  );
};

export default App;
